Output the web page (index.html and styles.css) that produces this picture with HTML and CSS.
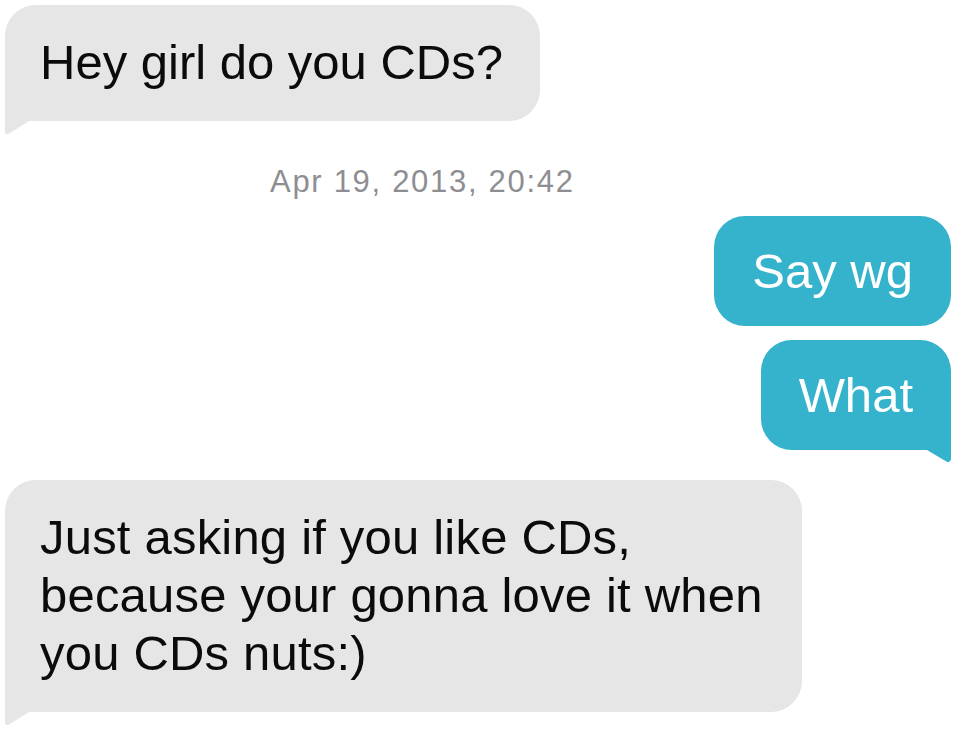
FILE: index.html
```html
<!DOCTYPE html>
<html lang="en">
<head>
<meta charset="utf-8">
<title>Messages</title>
<link rel="stylesheet" href="styles.css">
</head>
<body>
<main class="chat">
  <div class="msg msg-in">Hey girl do you CDs?</div>
  <div class="stamp">Apr 19, 2013, 20:42</div>
  <div class="msg msg-out msg-first">Say wg</div>
  <div class="msg msg-out msg-last">What</div>
  <div class="msg msg-in msg-long">Just asking if you like CDs, because your gonna love it when you CDs nuts:)</div>
</main>
</body>
</html>
```
FILE: styles.css
```css
html, body {
  margin: 0;
  padding: 0;
  background: #ffffff;
}

body {
  width: 980px;
  height: 752px;
  overflow: hidden;
  font-family: "Liberation Sans", Arial, sans-serif;
}

.chat {
  display: flex;
  flex-direction: column;
  padding: 5px 29px 0 5px;
}

.msg {
  position: relative;
  font-size: 49px;
  line-height: 58px;
  border-radius: 31px;
}

.msg-in {
  align-self: flex-start;
  background: #e6e6e7;
  color: #0b0b0b;
  padding: 28px 37px 30px 35px;
  border-bottom-left-radius: 0;
}

.msg-in::after {
  content: "";
  position: absolute;
  left: 0;
  top: 100%;
  width: 24px;
  height: 13px;
  background: #e6e6e7;
  clip-path: polygon(0 0, 100% 0, 14% 100%, 4% 100%, 0 88%);
}

.msg-long {
  max-width: 797px;
  box-sizing: border-box;
  margin-top: 30px;
  letter-spacing: 0.2px;
}

.stamp {
  align-self: flex-start;
  margin: 43px 0 0 265px;
  font-size: 31px;
  line-height: 36px;
  letter-spacing: 1.7px;
  color: #8e8e92;
}

.msg-out {
  align-self: flex-end;
  background: #35b3cc;
  color: #ffffff;
  padding: 26px 38px 26px 38px;
}

.msg-first {
  margin-top: 16px;
}

.msg-last {
  margin-top: 14px;
  border-bottom-right-radius: 0;
}

.msg-last::after {
  content: "";
  position: absolute;
  right: 0;
  top: 100%;
  width: 24px;
  height: 12px;
  background: #35b3cc;
  clip-path: polygon(0 0, 100% 0, 100% 80%, 92% 100%, 84% 100%);
}
```
